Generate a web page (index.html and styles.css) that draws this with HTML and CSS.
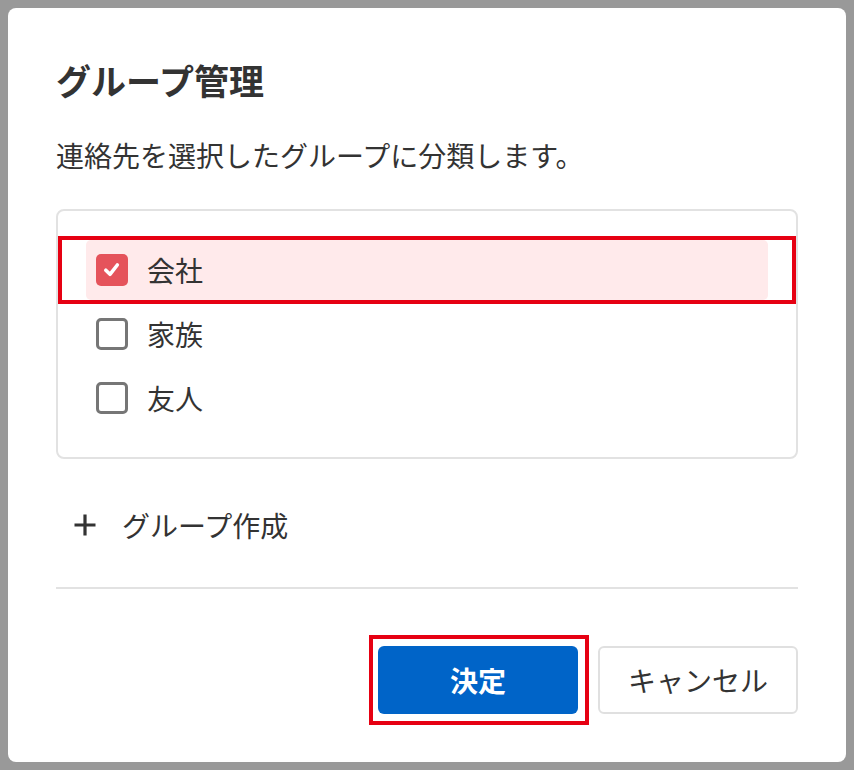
FILE: index.html
```html
<!DOCTYPE html>
<html lang="ja">
<head>
<meta charset="utf-8">
<title>グループ管理</title>
<link rel="stylesheet" href="styles.css">
</head>
<body>
<div class="dialog">
  <h1 class="title">グループ管理</h1>
  <p class="desc">連絡先を選択したグループに分類します。</p>
  <div class="list">
    <label class="row selected">
      <span class="box checked">
        <svg viewBox="0 0 32 32" width="32" height="32"><path d="M9.8 16.2 L14 20.3 L21.3 11" fill="none" stroke="#fff" stroke-width="3.6" stroke-linecap="round" stroke-linejoin="round"/></svg>
      </span>
      <span class="label">会社</span>
      <span class="mark mark-row"></span>
    </label>
    <label class="row">
      <span class="box"></span>
      <span class="label">家族</span>
    </label>
    <label class="row">
      <span class="box"></span>
      <span class="label">友人</span>
    </label>
  </div>
  <div class="create">
    <svg class="plus" viewBox="0 0 24 24" width="24" height="24"><path d="M12 1.5 V22.5 M1.5 12 H22.5" stroke="#333" stroke-width="3.2" fill="none"/></svg>
    <span class="create-text">グループ作成</span>
  </div>
  <hr class="divider">
  <div class="footer">
    <button class="btn primary">決定<span class="mark mark-btn"></span></button>
    <button class="btn secondary">キャンセル</button>
  </div>
</div>
</body>
</html>
```
FILE: styles.css
```css
html, body {
  margin: 0;
  padding: 0;
}
body {
  background: #999999;
  padding: 8px;
  font-family: "Noto Sans CJK JP", "Noto Sans", sans-serif;
  color: #333333;
}
.dialog {
  background: #ffffff;
  border-radius: 8px;
  height: 754px;
  box-sizing: border-box;
  padding: 48px 48px 47px 48px;
  display: flex;
  flex-direction: column;
}
.title {
  margin: 0;
  font-size: 35px;
  line-height: 48px;
  font-weight: 700;
  color: #333333;
}
.desc {
  margin: 31px 0 0 0;
  font-size: 28px;
  line-height: 40px;
  color: #333333;
}
.list {
  margin-top: 34px;
  border: 2px solid #e2e2e2;
  border-radius: 8px;
  padding: 29px 28px;
  display: flex;
  flex-direction: column;
  gap: 4px;
}
.row {
  position: relative;
  height: 60px;
  display: flex;
  align-items: center;
  padding-left: 10px;
  border-radius: 5px;
}
.row.selected {
  background: #ffeaeb;
}
.box {
  width: 32px;
  height: 32px;
  box-sizing: border-box;
  border: 3px solid #767676;
  border-radius: 5px;
  flex: none;
  display: flex;
}
.box.checked {
  border: none;
  background: #e5535b;
}
.label {
  margin-left: 19px;
  font-size: 28px;
  line-height: 40px;
}
.create {
  margin-top: 34px;
  height: 64px;
  display: flex;
  align-items: center;
  padding-left: 17px;
}
.plus {
  flex: none;
}
.create-text {
  margin-left: 25px;
  font-size: 28px;
  line-height: 40px;
}
.divider {
  margin: 30px 0 0 0;
  border: none;
  height: 2px;
  background: #e2e2e2;
}
.footer {
  margin-top: 57px;
  display: flex;
  justify-content: flex-end;
  gap: 20px;
}
.btn {
  position: relative;
  width: 200px;
  height: 68px;
  border-radius: 6px;
  font-family: "Noto Sans CJK JP", "Noto Sans", sans-serif;
  font-size: 28px;
  padding: 0;
  cursor: pointer;
}
.primary {
  background: #0064c8;
  border: none;
  color: #ffffff;
  font-weight: 700;
}
.secondary {
  background: #ffffff;
  border: 2px solid #e0e0e0;
  color: #333333;
  font-weight: 400;
}
.mark {
  position: absolute;
  border: 4px solid #e60012;
  pointer-events: none;
}
.mark-row {
  left: -28px;
  right: -28px;
  top: -4px;
  bottom: -4px;
}
.mark-btn {
  left: -9px;
  right: -11px;
  top: -11px;
  bottom: -11px;
}
```
